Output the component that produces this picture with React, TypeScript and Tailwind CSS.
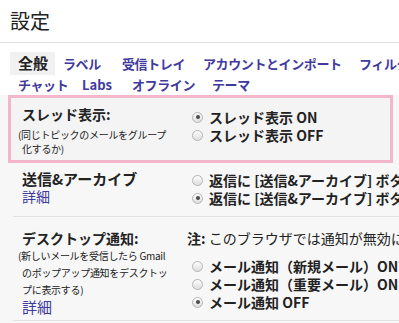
import React from "react";

const font = { fontFamily: '"Noto Sans CJK JP", "Noto Sans", sans-serif' };

function Radio({ checked }: { checked?: boolean }) {
  return (
    <span className="mr-[6px] inline-flex h-[11px] w-[11px] shrink-0 items-center justify-center rounded-full border border-[#b5b5b5] bg-gradient-to-b from-[#fdfdfd] to-[#dedede]">
      {checked && <span className="h-[4px] w-[4px] rounded-full bg-[#4a4a4a]" />}
    </span>
  );
}

function Option({ checked, children }: { checked?: boolean; children: React.ReactNode }) {
  return (
    <div className="flex h-[18px] items-center whitespace-nowrap text-[14px] font-bold text-[#222]">
      <Radio checked={checked} />
      {children}
    </div>
  );
}

export default function App() {
  return (
    <div className="h-[323px] w-[399px] overflow-hidden bg-[#f7f7f7]" style={font}>
      {/* Header */}
      <div className="h-[43px] border-b border-[#e0e0e0] bg-white pl-[10px] pt-[7px] text-[20px] leading-[28px] text-[#222] shadow-[0_1px_2px_rgba(0,0,0,0.05)]">
        設定
      </div>

      {/* Tabs */}
      <div className="h-[52px] bg-white pl-[10px] pt-[9px] text-[13px] font-bold tracking-[-0.4px] text-[#3f3a9e]">
        <div className="flex h-[23px] items-center whitespace-nowrap">
          <span className="flex h-[23px] w-[45px] shrink-0 items-center bg-[#f1f1f1] pl-[8px] text-[15px] tracking-normal text-[#222]">
            全般
          </span>
          <span className="ml-[8px] w-[59px] shrink-0">ラベル</span>
          <span className="w-[81px] shrink-0">受信トレイ</span>
          <span className="w-[156px] shrink-0">アカウントとインポート</span>
          <span className="shrink-0">フィルタ</span>
        </div>
        <div className="flex h-[20px] items-center whitespace-nowrap pl-[8px]">
          <span className="w-[64px] shrink-0">チャット</span>
          <span className="w-[50px] shrink-0 tracking-normal">Labs</span>
          <span className="w-[80px] shrink-0">オフライン</span>
          <span className="shrink-0">テーマ</span>
        </div>
      </div>

      {/* Thread view (highlighted) */}
      <div className="ml-[8px] mr-[6px] flex h-[68px] border-[3px] border-[#f4b6cb] bg-[#f4f4f4] pl-[11px] pt-[7px]">
        <div className="w-[170px] shrink-0">
          <div className="text-[14px] font-bold leading-[18px] text-[#222]">スレッド表示:</div>
          <div className="-ml-[4px] mt-[5px] whitespace-nowrap text-[10px] leading-[14px] tracking-[-0.3px] text-[#222]">
            (同じトピックのメールをグループ
            <br />
            <span className="ml-[4px]">化するか)</span>
          </div>
        </div>
        <div className="pt-[3px]">
          <Option checked>スレッド表示 ON</Option>
          <Option>スレッド表示 OFF</Option>
        </div>
      </div>

      {/* Send & Archive */}
      <div className="ml-[13px] flex h-[54px] border-b border-[#e2e2e2] pl-[9px] pt-[7px]">
        <div className="w-[170px] shrink-0">
          <div className="text-[15px] font-bold leading-[18px] text-[#222]">送信&amp;アーカイブ</div>
          <div className="text-[14px] leading-[17px] text-[#3f3a9e]">詳細</div>
        </div>
        <div className="pt-[1px]">
          <Option>返信に [送信&amp;アーカイブ] ボタンを表示</Option>
          <Option checked>返信に [送信&amp;アーカイブ] ボタンを表示しない</Option>
        </div>
      </div>

      {/* Desktop notifications */}
      <div className="ml-[13px] flex h-[104px] border-b border-[#e2e2e2] pl-[9px] pt-[12px]">
        <div className="w-[170px] shrink-0">
          <div className="text-[14px] font-bold leading-[18px] text-[#222]">デスクトップ通知:</div>
          <div className="-ml-[4px] whitespace-nowrap text-[10px] leading-[17px] tracking-[-0.3px] text-[#222]">
            (新しいメールを受信したら Gmail
            <br />
            <span className="ml-[4px]">のポップアップ通知をデスクトッ</span>
            <br />
            <span className="ml-[4px]">プに表示する)</span>
          </div>
          <div className="text-[15px] leading-[18px] text-[#3f3a9e]">詳細</div>
        </div>
        <div>
          <div className="-ml-[5px] whitespace-nowrap text-[14px] leading-[18px] text-[#222]">
            <span className="font-bold">注:</span> このブラウザでは通知が無効になっています。
          </div>
          <div className="mt-[10px]">
            <Option>メール通知（新規メール）ON - 受信トレイ</Option>
            <Option>メール通知（重要メール）ON - 重要</Option>
            <Option checked>メール通知 OFF</Option>
          </div>
        </div>
      </div>
    </div>
  );
}
